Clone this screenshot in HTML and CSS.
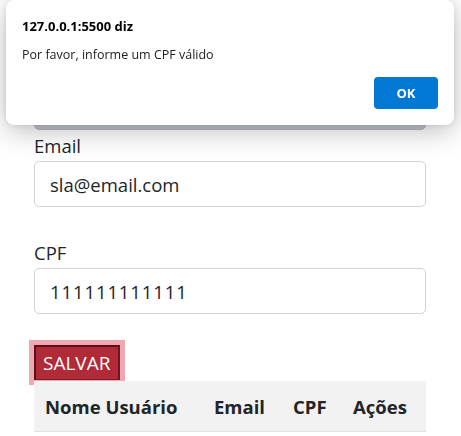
FILE: index.html
```html
<!DOCTYPE html>
<html lang="pt-BR">
<head>
<meta charset="utf-8">
<title>Cadastro</title>
<link rel="stylesheet" href="styles.css">
</head>
<body>
<main class="page">
  <div class="field field-first">
    <div class="label-spacer"></div>
    <div class="input input-hidden"></div>
  </div>
  <div class="field field-email">
    <label class="label">Email</label>
    <input class="input" type="text" value="sla@email.com">
  </div>
  <div class="field field-cpf">
    <label class="label">CPF</label>
    <input class="input input-cpf" type="text" value="111111111111">
  </div>
  <button class="btn-save" type="button">SALVAR</button>
  <table class="table">
    <thead>
      <tr>
        <th class="c1">Nome Usuário</th>
        <th class="c2">Email</th>
        <th class="c3">CPF</th>
        <th class="c4">Ações</th>
      </tr>
    </thead>
  </table>
</main>

<div class="dialog" role="alertdialog">
  <div class="dialog-title">127.0.0.1:5500 diz</div>
  <div class="dialog-msg">Por favor, informe um CPF válido</div>
  <div class="dialog-actions">
    <button class="dialog-ok" type="button">OK</button>
  </div>
</div>
</body>
</html>
```

FILE: styles.css
```css
html, body {
  margin: 0;
  padding: 0;
  background: #fff;
}

body {
  font-family: "Open Sans", "Noto Sans", sans-serif;
  color: #212529;
  width: 461px;
  height: 436px;
  overflow: hidden;
}

.page {
  padding-left: 34px;
  width: 392px;
}

.field {
  display: flex;
  flex-direction: column;
}

.field-first {
  padding-top: 54px;
  margin-bottom: 1px;
}

.label-spacer {
  height: 30px;
}

.field-email {
  margin-bottom: 31px;
}

.field-cpf {
  margin-bottom: 31px;
}

.label {
  font-size: 18.5px;
  line-height: 30px;
  height: 30px;
  color: #212529;
}

.input {
  box-sizing: border-box;
  height: 46px;
  width: 392px;
  margin: 0;
  padding: 0 15px;
  font-family: inherit;
  font-size: 18.5px;
  color: #212529;
  background: #fff;
  border: 1px solid #ced4da;
  border-radius: 5px;
  outline: none;
}

.input-cpf {
  letter-spacing: 0.9px;
}

.input-hidden {
  background: #c6c9d0;
  border-color: #b4b7be;
}

.btn-save {
  display: block;
  box-sizing: border-box;
  height: 35px;
  margin: 0;
  padding: 0 8px 0 7px;
  font-family: inherit;
  font-size: 19px;
  line-height: 1;
  color: #fff;
  background: #b02a37;
  border-style: solid;
  border-width: 2px 2px 1px 2px;
  border-color: #5c0f18 #6e1520 #7a1c26 #5c0f18;
  border-radius: 0;
  box-shadow: 0 0 0 5px #f0a8b0;
}

.table {
  margin-top: 1px;
  width: 392px;
  border-collapse: collapse;
  table-layout: fixed;
}

.table th {
  height: 50px;
  padding: 0 0 0 11px;
  text-align: left;
  font-size: 18.5px;
  font-weight: 700;
  color: #212529;
  background: #f2f2f2;
  border-bottom: 1px solid #dee2e6;
  white-space: nowrap;
}

.c1 { width: 158px; }
.c2 { width: 68px; }
.c3 { width: 49px; }
.c4 { width: 73px; }

.dialog {
  position: fixed;
  top: 0;
  left: 6px;
  width: 448px;
  height: 125px;
  box-sizing: border-box;
  padding: 17px 16px 16px 16px;
  background: #fff;
  border-radius: 8px;
  box-shadow: 0 6px 28px rgba(0, 0, 0, 0.26), 0 0 6px rgba(0, 0, 0, 0.1);
  display: flex;
  flex-direction: column;
  font-family: "Open Sans", "Noto Sans", sans-serif;
}

.dialog-title {
  font-size: 13px;
  font-weight: 700;
  line-height: 18px;
  color: #000;
}

.dialog-msg {
  margin-top: 11px;
  font-size: 12.5px;
  line-height: 18px;
  color: #202124;
}

.dialog-actions {
  margin-top: auto;
  display: flex;
  justify-content: flex-end;
}

.dialog-ok {
  width: 64px;
  height: 32px;
  margin: 0;
  padding: 0;
  border: 0;
  border-radius: 4px;
  background: #0078d4;
  color: #fff;
  font-family: inherit;
  font-size: 13px;
  font-weight: 700;
}
```
